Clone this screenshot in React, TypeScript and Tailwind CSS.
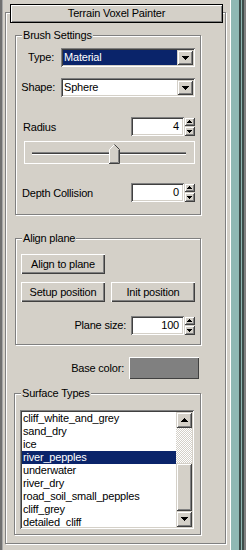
import React from "react";

const sunken =
  "shadow-[inset_1px_1px_0_#808080,inset_-1px_-1px_0_#ffffff,inset_2px_2px_0_#404040,inset_-2px_-2px_0_#d4d0c8]";
const raised =
  "shadow-[inset_1px_1px_0_#ffffff,inset_-1px_-1px_0_#404040,inset_-2px_-2px_0_#808080]";
const raised2 =
  "shadow-[inset_1px_1px_0_#d4d0c8,inset_-1px_-1px_0_#404040,inset_2px_2px_0_#ffffff,inset_-2px_-2px_0_#808080]";
const etched =
  "border border-[#808080] shadow-[inset_1px_1px_0_#ffffff,1px_1px_0_#ffffff]";

function DownTri() {
  return (
    <svg width="7" height="4" viewBox="0 0 7 4" shapeRendering="crispEdges">
      <path d="M0 0h7v1H0z M1 1h5v1H1z M2 2h3v1H2z M3 3h1v1H3z" fill="#000" />
    </svg>
  );
}

function UpTri() {
  return (
    <svg width="7" height="4" viewBox="0 0 7 4" shapeRendering="crispEdges">
      <path d="M3 0h1v1H3z M2 1h3v1H2z M1 2h5v1H1z M0 3h7v1H0z" fill="#000" />
    </svg>
  );
}

function SmallUp() {
  return (
    <svg width="5" height="3" viewBox="0 0 5 3" shapeRendering="crispEdges">
      <path d="M2 0h1v1H2z M1 1h3v1H1z M0 2h5v1H0z" fill="#000" />
    </svg>
  );
}

function SmallDown() {
  return (
    <svg width="5" height="3" viewBox="0 0 5 3" shapeRendering="crispEdges">
      <path d="M0 0h5v1H0z M1 1h3v1H1z M2 2h1v1H2z" fill="#000" />
    </svg>
  );
}

function Spinner({ value }: { value: string }) {
  return (
    <div className="flex h-[19px]">
      <div
        className={`w-[53px] h-[19px] bg-white ${sunken} flex items-center justify-end pr-[5px]`}
      >
        {value}
      </div>
      <div className="w-[11px] flex flex-col">
        <div className={`h-[9px] bg-[#d4d0c8] ${raised2} flex items-center justify-center`}>
          <SmallUp />
        </div>
        <div className={`h-[10px] bg-[#d4d0c8] ${raised2} flex items-center justify-center`}>
          <SmallDown />
        </div>
      </div>
    </div>
  );
}

function Combo({ text, selected }: { text: string; selected?: boolean }) {
  return (
    <div className={`w-[134px] h-[19px] bg-white ${sunken} p-[2px] flex`}>
      <div
        className={
          selected
            ? "flex-1 flex items-center pl-[1px] bg-[#0a246a] text-white"
            : "flex-1 flex items-center pl-[1px]"
        }
      >
        {text}
      </div>
      <div className={`w-[16px] bg-[#d4d0c8] ${raised2} flex items-center justify-center`}>
        <DownTri />
      </div>
    </div>
  );
}

function Button({ label }: { label: string }) {
  return (
    <div
      className={`w-[84px] h-[20px] bg-[#d4d0c8] ${raised} flex items-center justify-center`}
    >
      {label}
    </div>
  );
}

function GroupLabel({ text }: { text: string }) {
  return (
    <div className="absolute -top-[7px] left-[6px] px-[1px] bg-[#d4d0c8] leading-[13px] whitespace-nowrap">
      {text}
    </div>
  );
}

const items = [
  "cliff_white_and_grey",
  "sand_dry",
  "ice",
  "river_pepples",
  "underwater",
  "river_dry",
  "road_soil_small_pepples",
  "cliff_grey",
  "detailed_cliff",
];

export default function App() {
  return (
    <div className="w-[246px] h-[550px] bg-[#d4d0c8] flex text-[11px] leading-[13px] text-black font-['Liberation_Sans',Arial,sans-serif] overflow-hidden tracking-[-0.2px]">
      <div className="w-[2px] bg-[#707070]" />
      <div className="w-[1px] bg-[#a8a8a8]" />
      <div className="w-[227px] pl-[2px] pt-[12px]">
        <div className={`relative w-[221px] h-[532px] ${etched}`}>
          <div className="absolute -top-[9px] left-[4px] w-[213px] h-[19px] bg-[#d4d0c8] border border-black shadow-[inset_1px_1px_0_#ffffff,inset_-1px_-1px_0_#808080] flex items-center justify-center">
            Terrain Voxel Painter
          </div>

          {/* Brush Settings */}
          <div className={`relative mt-[22px] ml-[9px] w-[186px] ${etched} pb-[12px]`}>
            <GroupLabel text="Brush Settings" />
            <div className="mt-[12px] flex items-center h-[19px]">
              <div className="w-[40px] text-right pr-[2px]">Type:</div>
              <div className="ml-[5px]">
                <Combo text="Material" selected />
              </div>
            </div>
            <div className="mt-[11px] flex items-center h-[19px]">
              <div className="w-[40px] text-right pr-[1px]">Shape:</div>
              <div className="ml-[5px]">
                <Combo text="Sphere" />
              </div>
            </div>
            <div className="mt-[20px] flex items-center justify-between h-[19px] pl-[7px] pr-[5px]">
              <div className="pt-[2px]">Radius</div>
              <Spinner value="4" />
            </div>
            <div className="relative mt-[5px] ml-[8px] w-[171px] h-[23px] border border-white">
              <div className="ml-[7px] mt-[10px] w-[154px] h-[3px] border-t border-t-[#808080] bg-[#404040] border-b border-b-white" />
              <svg
                className="absolute left-[84px] top-[2px]"
                width="11"
                height="20"
                viewBox="0 0 11 20"
              >
                <polygon points="0.5,5.5 5.5,0.5 10.5,5.5 10.5,19.5 0.5,19.5" fill="#d4d0c8" />
                <polyline points="0.5,19 0.5,5.5 5,1" fill="none" stroke="#ffffff" strokeWidth="1" />
                <polyline points="5.5,0.5 10.5,5.5 10.5,19.5 0,19.5" fill="none" stroke="#404040" strokeWidth="1" />
                <polyline points="9.5,6 9.5,18.5 1,18.5" fill="none" stroke="#808080" strokeWidth="1" />
              </svg>
            </div>
            <div className="mt-[19px] flex items-center justify-between h-[19px] pl-[6px] pr-[5px]">
              <div className="pt-[2px]">Depth Collision</div>
              <Spinner value="0" />
            </div>
          </div>

          {/* Align plane */}
          <div className={`relative mt-[23px] ml-[9px] w-[186px] ${etched} pb-[9px]`}>
            <GroupLabel text="Align plane" />
            <div className="mt-[15px] ml-[5px]">
              <Button label="Align to plane" />
            </div>
            <div className="mt-[8px] ml-[5px] flex gap-[6px]">
              <Button label="Setup position" />
              <Button label="Init position" />
            </div>
            <div className="mt-[14px] flex items-center justify-end h-[19px] pr-[5px]">
              <div className="mr-[5px]">Plane size:</div>
              <Spinner value="100" />
            </div>
          </div>

          {/* Base color */}
          <div className="mt-[12px] flex items-center justify-end h-[22px] pr-[26px]">
            <div className="mr-[5px]">Base color:</div>
            <div className="w-[70px] h-[22px] bg-[#808080] shadow-[inset_1px_1px_0_#ffffff,inset_-1px_-1px_0_#404040]" />
          </div>

          {/* Surface Types */}
          <div className={`relative mt-[14px] ml-[8px] w-[187px] ${etched} pb-[5px]`}>
            <GroupLabel text="Surface Types" />
            <div className={`mt-[16px] ml-[5px] w-[174px] h-[119px] bg-white ${sunken} p-[2px] flex`}>
              <div className="flex-1 overflow-hidden">
                {items.map((it) => (
                  <div
                    key={it}
                    className={
                      it === "river_pepples"
                        ? "h-[13px] leading-[13px] pl-[1px] whitespace-nowrap bg-[#0a246a] text-white"
                        : "h-[13px] leading-[13px] pl-[1px] whitespace-nowrap"
                    }
                  >
                    {it}
                  </div>
                ))}
              </div>
              <div className="w-[16px] flex flex-col">
                <div className={`h-[16px] bg-[#d4d0c8] ${raised2} flex items-center justify-center`}>
                  <UpTri />
                </div>
                <div className="h-[35px] bg-[image:repeating-conic-gradient(#d4d0c8_0%_25%,#ffffff_0%_50%)] bg-[length:2px_2px]" />
                <div className={`flex-1 bg-[#d4d0c8] ${raised2}`} />
                <div className={`h-[16px] bg-[#d4d0c8] ${raised2} flex items-center justify-center`}>
                  <DownTri />
                </div>
              </div>
            </div>
          </div>
        </div>
      </div>
      <div className="w-[1px] bg-white" />
      <div className="w-[8px] bg-[#8fb8b4]" />
      <div className="w-[2px] bg-[#3d4c4a]" />
      <div className="w-[1px] bg-[#8fb8b4]" />
      <div className="w-[2px] bg-[#3d4c4a]" />
      <div className="w-[2px] bg-[#808080]" />
    </div>
  );
}
